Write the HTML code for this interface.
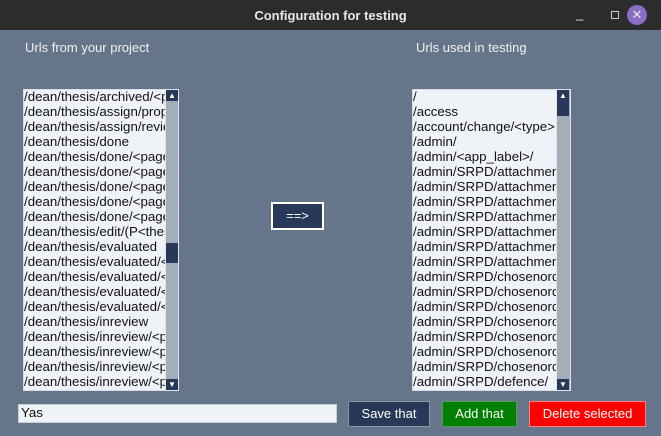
<!DOCTYPE html><html><head><style>
body{margin:0;width:661px;height:436px;background:#2b2b2b;overflow:hidden;font-family:"Liberation Sans",sans-serif}
.win{position:absolute;left:0;top:0;width:661px;height:436px;background:#66768a;border-radius:8px 8px 0 0;overflow:hidden}
.tb{position:absolute;left:0;top:0;width:661px;height:30px;background:#2c2c2c;color:#e8e8e8;font-size:13px;font-weight:bold;text-align:center;line-height:32px}
.lbl{position:absolute;color:#f0f0f0;font-size:13px;top:40px}
.lb{position:absolute;top:89px;height:302px;background:#eff3f8;border:1px solid #d8dde4;box-sizing:border-box;overflow:hidden;font-size:13.3px;color:#111}
.lb div{height:15px;line-height:13px;white-space:nowrap;padding-left:0}
.sb{position:absolute;top:89px;height:302px;background:#a4aebb;border:1px solid #e0e4ea;box-sizing:border-box}
.ar{position:absolute;left:0;width:12px;height:11px;background:#283858;color:#fff;font-size:8px;text-align:center;line-height:11px}
.th{position:absolute;left:0;width:12px;background:#283858}
.btn{position:absolute;box-sizing:border-box;color:#fff;font-size:13px;text-align:center}
</style></head><body><div class="win">
<div class="tb">Configuration for testing
<span style="position:absolute;left:576px;top:-2px;font-weight:normal">_</span>
<span style="position:absolute;left:611px;top:11px;width:8px;height:8px;border:1px solid #ccc;box-sizing:border-box"></span>
<span style="position:absolute;left:627px;top:5px;width:20px;height:20px;border-radius:50%;background:#8c6cc4;line-height:20px;font-weight:normal;font-size:13px">✕</span></div>
<div class="lbl" style="left:25px">Urls from your project</div>
<div class="lbl" style="left:416px">Urls used in testing</div>
<div class="lb" style="left:23px;width:143px">
<div>/dean/thesis/archived/&lt;page&gt;</div><div>/dean/thesis/assign/proposal</div><div>/dean/thesis/assign/review</div><div>/dean/thesis/done</div><div>/dean/thesis/done/&lt;page&gt;</div><div>/dean/thesis/done/&lt;page&gt;</div><div>/dean/thesis/done/&lt;page&gt;</div><div>/dean/thesis/done/&lt;page&gt;</div><div>/dean/thesis/done/&lt;page&gt;</div><div>/dean/thesis/edit/(P&lt;thesis&gt;</div><div>/dean/thesis/evaluated</div><div>/dean/thesis/evaluated/&lt;p</div><div>/dean/thesis/evaluated/&lt;p</div><div>/dean/thesis/evaluated/&lt;p</div><div>/dean/thesis/evaluated/&lt;p</div><div>/dean/thesis/inreview</div><div>/dean/thesis/inreview/&lt;page</div><div>/dean/thesis/inreview/&lt;page</div><div>/dean/thesis/inreview/&lt;page</div><div>/dean/thesis/inreview/&lt;page</div></div>
<div class="sb" style="left:165px;width:14px"><div class="ar" style="top:0">▲</div><div class="th" style="top:153px;height:20px"></div><div class="ar" style="top:289px">▼</div></div>
<div class="lb" style="left:412px;width:145px">
<div>/</div><div>/access</div><div>/account/change/&lt;type&gt;</div><div>/admin/</div><div>/admin/&lt;app_label&gt;/</div><div>/admin/SRPD/attachment</div><div>/admin/SRPD/attachment</div><div>/admin/SRPD/attachment</div><div>/admin/SRPD/attachment</div><div>/admin/SRPD/attachment</div><div>/admin/SRPD/attachment</div><div>/admin/SRPD/attachment</div><div>/admin/SRPD/chosenorder</div><div>/admin/SRPD/chosenorder</div><div>/admin/SRPD/chosenorder</div><div>/admin/SRPD/chosenorder</div><div>/admin/SRPD/chosenorder</div><div>/admin/SRPD/chosenorder</div><div>/admin/SRPD/chosenorder</div><div>/admin/SRPD/defence/</div></div>
<div class="sb" style="left:556px;width:15px"><div class="ar" style="top:0">▲</div><div class="th" style="top:11px;height:15px"></div><div class="ar" style="top:289px">▼</div></div>
<div class="btn" style="left:271px;top:202px;width:53px;height:28px;background:#283858;border:2px solid #fff;line-height:24px">==&gt;</div>
<div style="position:absolute;left:18px;top:404px;width:319px;height:19px;background:#eff3f8;border:1px solid #c8ced6;box-sizing:border-box;font-size:13.3px;line-height:15px;padding-left:2px;color:#111">Yas</div>
<div class="btn" style="left:348px;top:401px;width:82px;height:26px;background:#283858;border:1px solid #8a96a6;line-height:23px">Save that</div>
<div class="btn" style="left:442px;top:401px;width:75px;height:26px;background:#008000;border:1px solid #5a9a5a;line-height:23px">Add that</div>
<div class="btn" style="left:529px;top:401px;width:117px;height:26px;background:#ff0000;border:1px solid #ff8080;line-height:23px">Delete selected</div>
</div></body></html>
